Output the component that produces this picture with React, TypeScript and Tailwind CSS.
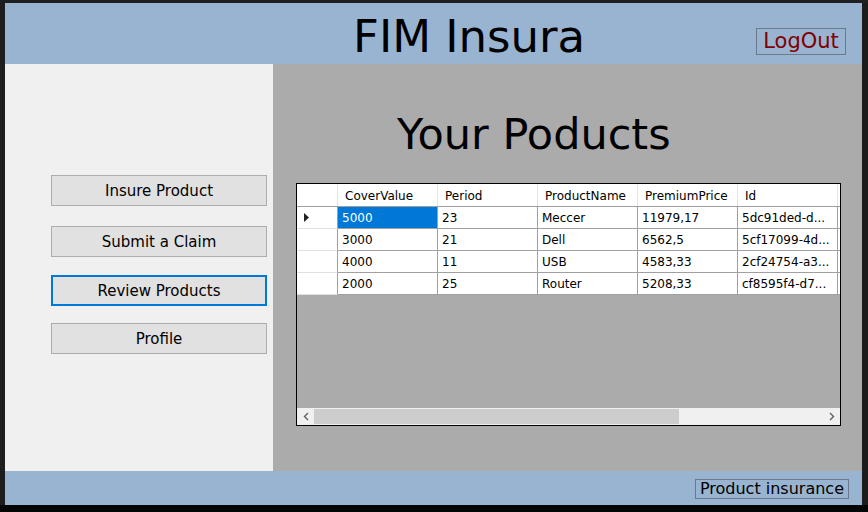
import React from 'react';

const FONT = { fontFamily: '"DejaVu Sans", Verdana, sans-serif' };

const columns = ['CoverValue', 'Period', 'ProductName', 'PremiumPrice', 'Id'];

const rows = [
    ['5000', '23', 'Meccer', '11979,17', '5dc91ded-d...'],
    ['3000', '21', 'Dell', '6562,5', '5cf17099-4d...'],
    ['4000', '11', 'USB', '4583,33', '2cf24754-a3...'],
    ['2000', '25', 'Router', '5208,33', 'cf8595f4-d7...'],
];

const menu = [
    { label: 'Insure Product', mt: 'mt-[111px]' },
    { label: 'Submit a Claim', mt: 'mt-[20px]' },
    { label: 'Review Products', mt: 'mt-[18px]', focused: true },
    { label: 'Profile', mt: 'mt-[17px]' },
];

function MenuButton({ label, focused, mt }: { label: string; focused?: boolean; mt: string }) {
    return (
        <button
            className={
                mt +
                ' h-[31px] w-[216px] bg-[#e1e1e1] text-[15px] text-black flex items-center justify-center pt-[1px] ' +
                (focused ? 'border-2 border-[#0078d7]' : 'border border-[#adadad]')
            }
        >
            {label}
        </button>
    );
}

function ProductsGrid() {
    return (
        <div className="w-[545px] h-[243px] border border-black bg-[#ababab] flex flex-col text-[12px] text-black">
            {/* header */}
            <div className="flex h-[23px] bg-white border-b border-[#a0a0a0] shrink-0">
                <div className="w-[41px] border-r border-[#e5e5e5]" />
                {columns.map((c) => (
                    <div key={c} className="w-[100px] border-r border-[#e5e5e5] pl-[7px] pt-[1px] flex items-center">
                        {c}
                    </div>
                ))}
                <div className="flex-1" />
            </div>

            {/* rows */}
            {rows.map((r, i) => (
                <div key={i} className="flex h-[22px] shrink-0">
                    <div className="w-[41px] bg-white border-r border-[#a0a0a0] border-b border-b-[#e0e0e0] flex items-center pl-[7px]">
                        {i === 0 && (
                            <svg width="5" height="9" viewBox="0 0 5 9">
                                <polygon points="0,0 5,4.5 0,9" fill="#222" />
                            </svg>
                        )}
                    </div>
                    {r.map((v, j) => (
                        <div
                            key={j}
                            className={
                                'w-[100px] border-r border-b border-[#a0a0a0] pl-[4px] flex items-center ' +
                                (i === 0 && j === 0 ? 'bg-[#0078d7] text-white' : 'bg-white')
                            }
                        >
                            {v}
                        </div>
                    ))}
                    <div className="flex-1 bg-white border-b border-[#a0a0a0]" />
                </div>
            ))}

            <div className="flex-1" />

            {/* horizontal scrollbar */}
            <div className="h-[17px] bg-[#f0f0f0] flex items-center shrink-0">
                <div className="w-[17px] flex items-center justify-center">
                    <svg width="6" height="9" viewBox="0 0 6 9">
                        <polyline points="5,1 1.5,4.5 5,8" fill="none" stroke="#606060" strokeWidth="1.4" />
                    </svg>
                </div>
                <div className="w-[365px] h-[15px] bg-[#cdcdcd]" />
                <div className="flex-1" />
                <div className="w-[17px] flex items-center justify-center">
                    <svg width="6" height="9" viewBox="0 0 6 9">
                        <polyline points="1,1 4.5,4.5 1,8" fill="none" stroke="#606060" strokeWidth="1.4" />
                    </svg>
                </div>
            </div>
        </div>
    );
}

export default function App() {
    return (
        <div className="w-[868px] h-[512px] bg-[#1e1f21] flex flex-col overflow-hidden" style={FONT}>
            <div className="h-[3px] shrink-0" />
            <div className="flex h-[502px] shrink-0">
                <div className="w-[5px] bg-[#1e1e1e]" />
                <div className="w-[857px] flex flex-col">
                    {/* header */}
                    <div className="h-[61px] bg-[#99b4d1] flex items-start shrink-0">
                        <div className="ml-[348px] mt-[10px] text-[45px] leading-[48px] text-black">FIM Insura</div>
                        <div className="flex-1" />
                        <div className="mt-[25px] mr-[16px] w-[90px] h-[27px] border border-[#6a7a8a] text-[21px] leading-[25px] text-[#800000] flex items-center justify-center">
                            LogOut
                        </div>
                    </div>

                    {/* body */}
                    <div className="flex h-[407px] shrink-0">
                        <div className="w-[268px] bg-[#f0f0f0] flex flex-col pl-[46px]">
                            {menu.map((m) => (
                                <MenuButton key={m.label} label={m.label} focused={m.focused} mt={m.mt} />
                            ))}
                        </div>
                        <div className="flex-1 bg-[#ababab] flex flex-col">
                            <div className="ml-[124px] mt-[45px] text-[43px] leading-[50px] text-black">Your Poducts</div>
                            <div className="ml-[23px] mt-[24px]">
                                <ProductsGrid />
                            </div>
                        </div>
                    </div>

                    {/* footer */}
                    <div className="h-[34px] bg-[#99b4d1] flex items-start justify-end shrink-0">
                        <div className="mt-[8px] mr-[13px] h-[20px] px-[4px] border border-[#6a7a8a] text-[16px] leading-[18px] text-black flex items-center">
                            Product insurance
                        </div>
                    </div>
                </div>
                <div className="flex-1 bg-[#1c1c1c]" />
            </div>
            <div className="flex-1 bg-[#050505]" />
        </div>
    );
}
